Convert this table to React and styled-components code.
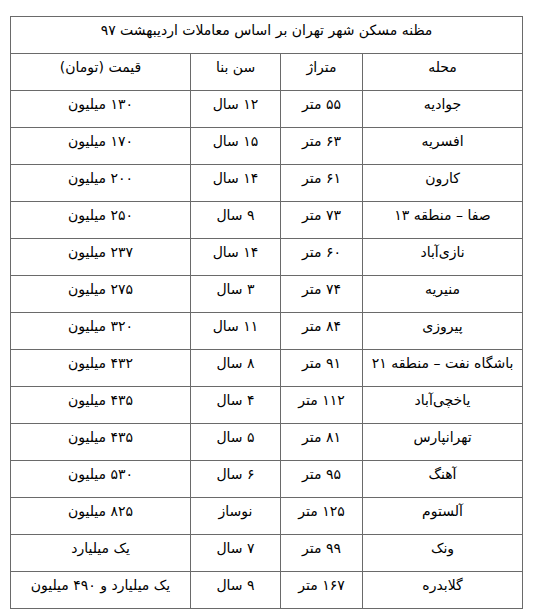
import React from "react";
import styled, { createGlobalStyle } from "styled-components";

const Global = createGlobalStyle`
  html, body { margin: 0; padding: 0; background: #ffffff; }
  body { font-family: "DejaVu Sans", sans-serif; color: #000; }
`;

const Page = styled.div`
  padding: 16px 0 0 10px;
`;

const Grid = styled.div`
  direction: rtl;
  display: grid;
  grid-template-columns: 159px 81px 89px 179px;
  grid-auto-rows: 36px;
  gap: 1px;
  padding: 1px;
  background: #6a6a6a;
  width: max-content;
`;

const Cell = styled.div`
  background: #ffffff;
  display: flex;
  justify-content: center;
  align-items: flex-start;
  padding-top: 3px;
  box-sizing: border-box;
  font-size: 14px;
  line-height: 20px;
  white-space: nowrap;
  grid-column: ${(p) => (p.$span ? "1 / -1" : "auto")};
`;

const rows = [
  ["جوادیه", "۵۵ متر", "۱۲ سال", "۱۳۰ میلیون"],
  ["افسریه", "۶۳ متر", "۱۵ سال", "۱۷۰ میلیون"],
  ["کارون", "۶۱ متر", "۱۴ سال", "۲۰۰ میلیون"],
  ["صفا – منطقه ۱۳", "۷۳ متر", "۹ سال", "۲۵۰ میلیون"],
  ["نازی‌آباد", "۶۰ متر", "۱۴ سال", "۲۳۷ میلیون"],
  ["منیریه", "۷۴ متر", "۳ سال", "۲۷۵ میلیون"],
  ["پیروزی", "۸۴ متر", "۱۱ سال", "۳۲۰ میلیون"],
  ["باشگاه نفت – منطقه ۲۱", "۹۱ متر", "۸ سال", "۴۳۲ میلیون"],
  ["یاخچی‌آباد", "۱۱۲ متر", "۴ سال", "۴۳۵ میلیون"],
  ["تهرانپارس", "۸۱ متر", "۵ سال", "۴۳۵ میلیون"],
  ["آهنگ", "۹۵ متر", "۶ سال", "۵۳۰ میلیون"],
  ["آلستوم", "۱۲۵ متر", "نوساز", "۸۲۵ میلیون"],
  ["ونک", "۹۹ متر", "۷ سال", "یک میلیارد"],
  ["گلابدره", "۱۶۷ متر", "۹ سال", "یک میلیارد و ۴۹۰ میلیون"],
];

const header = ["محله", "متراژ", "سن بنا", "قیمت (تومان)"];

export default function App() {
  return (
    <Page>
      <Global />
      <Grid>
        <Cell $span>مظنه مسکن شهر تهران بر اساس معاملات اردیبهشت ۹۷</Cell>
        {header.map((h) => (
          <Cell key={h}>{h}</Cell>
        ))}
        {rows.map((r, i) =>
          r.map((c, j) => <Cell key={i + "-" + j}>{c}</Cell>)
        )}
      </Grid>
    </Page>
  );
}
